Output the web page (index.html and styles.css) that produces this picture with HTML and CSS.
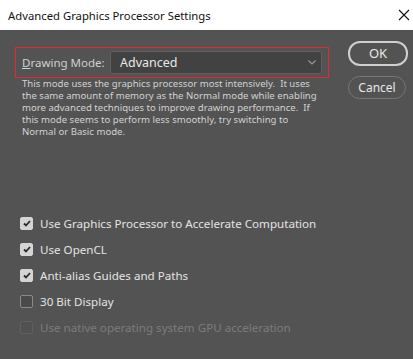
FILE: index.html
```html
<!DOCTYPE html>
<html>
<head>
  <title>Advanced Graphics Processor Settings</title>
  <meta charset="UTF-8">
  <link rel="stylesheet" href="styles.css">
</head>
<body>
  <div class="titlebar">
    <span class="title">Advanced Graphics Processor Settings</span>
    <svg class="close" width="12" height="12" viewBox="0 0 12 12">
      <path d="M1 1 L11 11 M11 1 L1 11" stroke="#111" stroke-width="1.1" fill="none"/>
    </svg>
  </div>

  <div class="dialog">
    <div class="main">
      <div class="mode-row">
        <label class="mode-label"><u>D</u>rawing Mode:</label>
        <div class="select">
          <span>Advanced</span>
          <svg width="8" height="5" viewBox="0 0 8 5">
            <path d="M0.5 0.5 L4 4 L7.5 0.5" stroke="#9a9a9a" stroke-width="1.2" fill="none"/>
          </svg>
        </div>
      </div>
      <p class="description">
        This mode uses the graphics processor most intensively.&nbsp; It uses<br>
        the same amount of memory as the Normal mode while enabling<br>
        more advanced techniques to improve drawing performance.&nbsp; If<br>
        this mode seems to perform less smoothly, try switching to<br>
        Normal or Basic mode.
      </p>

      <div class="options">
        <div class="option">
          <span class="box checked"><svg width="8" height="7" viewBox="0 0 8 7"><path d="M1 3.5 L3 5.5 L7 1" stroke="#2a2a2a" stroke-width="1.8" fill="none"/></svg></span>
          Use Graphics Processor to Accelerate Computation
        </div>
        <div class="option">
          <span class="box checked"><svg width="8" height="7" viewBox="0 0 8 7"><path d="M1 3.5 L3 5.5 L7 1" stroke="#2a2a2a" stroke-width="1.8" fill="none"/></svg></span>
          Use OpenCL
        </div>
        <div class="option">
          <span class="box checked"><svg width="8" height="7" viewBox="0 0 8 7"><path d="M1 3.5 L3 5.5 L7 1" stroke="#2a2a2a" stroke-width="1.8" fill="none"/></svg></span>
          Anti-alias Guides and Paths
        </div>
        <div class="option">
          <span class="box"></span>
          30 Bit Display
        </div>
        <div class="option disabled">
          <span class="box"></span>
          Use native operating system GPU acceleration
        </div>
      </div>
    </div>

    <div class="buttons">
      <div class="button primary">OK</div>
      <div class="button">Cancel</div>
    </div>
  </div>
</body>
</html>
```

FILE: styles.css
```css
body {
  margin: 0;
  width: 413px;
  height: 359px;
  overflow: hidden;
  background-color: #535353;
  font-family: "Noto Sans", "Open Sans", Arial, sans-serif;
}
.titlebar {
  height: 30px;
  background-color: #fff;
  display: flex;
  align-items: center;
  justify-content: space-between;
  padding: 0 3px 0 8px;
}
.title {
  font-size: 11.3px;
  color: #111;
}
.dialog {
  display: flex;
  padding: 11px 0 0 15px;
}
.main {
  width: 314px;
}
.mode-row {
  display: flex;
  align-items: center;
  height: 29px;
  margin-top: 6px;
  border: 1px solid #e02a2f;
  padding: 0 6px 0 6px;
}
.mode-label {
  width: 88px;
  font-size: 11.5px;
  color: #d0d0d0;
}
.select {
  flex: 1;
  height: 21px;
  display: flex;
  align-items: center;
  justify-content: space-between;
  padding: 0 5px 0 9px;
  background-color: #424242;
  border: 1px solid #5f5f5f;
  border-radius: 2px;
  font-size: 12.5px;
  color: #e8e8e8;
}
.description {
  margin: 0 0 0 7px;
  font-size: 9.6px;
  line-height: 12px;
  white-space: nowrap;
  color: #d2d2d2;
}
.options {
  margin-top: 72px;
  padding-left: 5px;
}
.option {
  display: flex;
  align-items: center;
  height: 26px;
  font-size: 11.6px;
  color: #e4e4e4;
}
.box {
  width: 11px;
  height: 11px;
  margin-right: 7px;
  border: 1px solid #8a8a8a;
  border-radius: 2px;
  background-color: #4a4a4a;
  display: flex;
  align-items: center;
  justify-content: center;
}
.box.checked {
  background-color: #d4d4d4;
  border-color: #d4d4d4;
}
.disabled {
  color: #7c7c7c;
}
.disabled .box {
  border-color: #5f5f5f;
  background-color: #515151;
}
.buttons {
  display: flex;
  flex-direction: column;
  gap: 10px;
  margin-left: 19px;
}
.button {
  width: 56px;
  height: 21px;
  line-height: 21px;
  text-align: center;
  border: 1px solid #777;
  border-radius: 12px;
  font-size: 12px;
  color: #e8e8e8;
}
.button.primary {
  border: 2px solid #cfcfcf;
  line-height: 20px;
  font-size: 13px;
}
```
